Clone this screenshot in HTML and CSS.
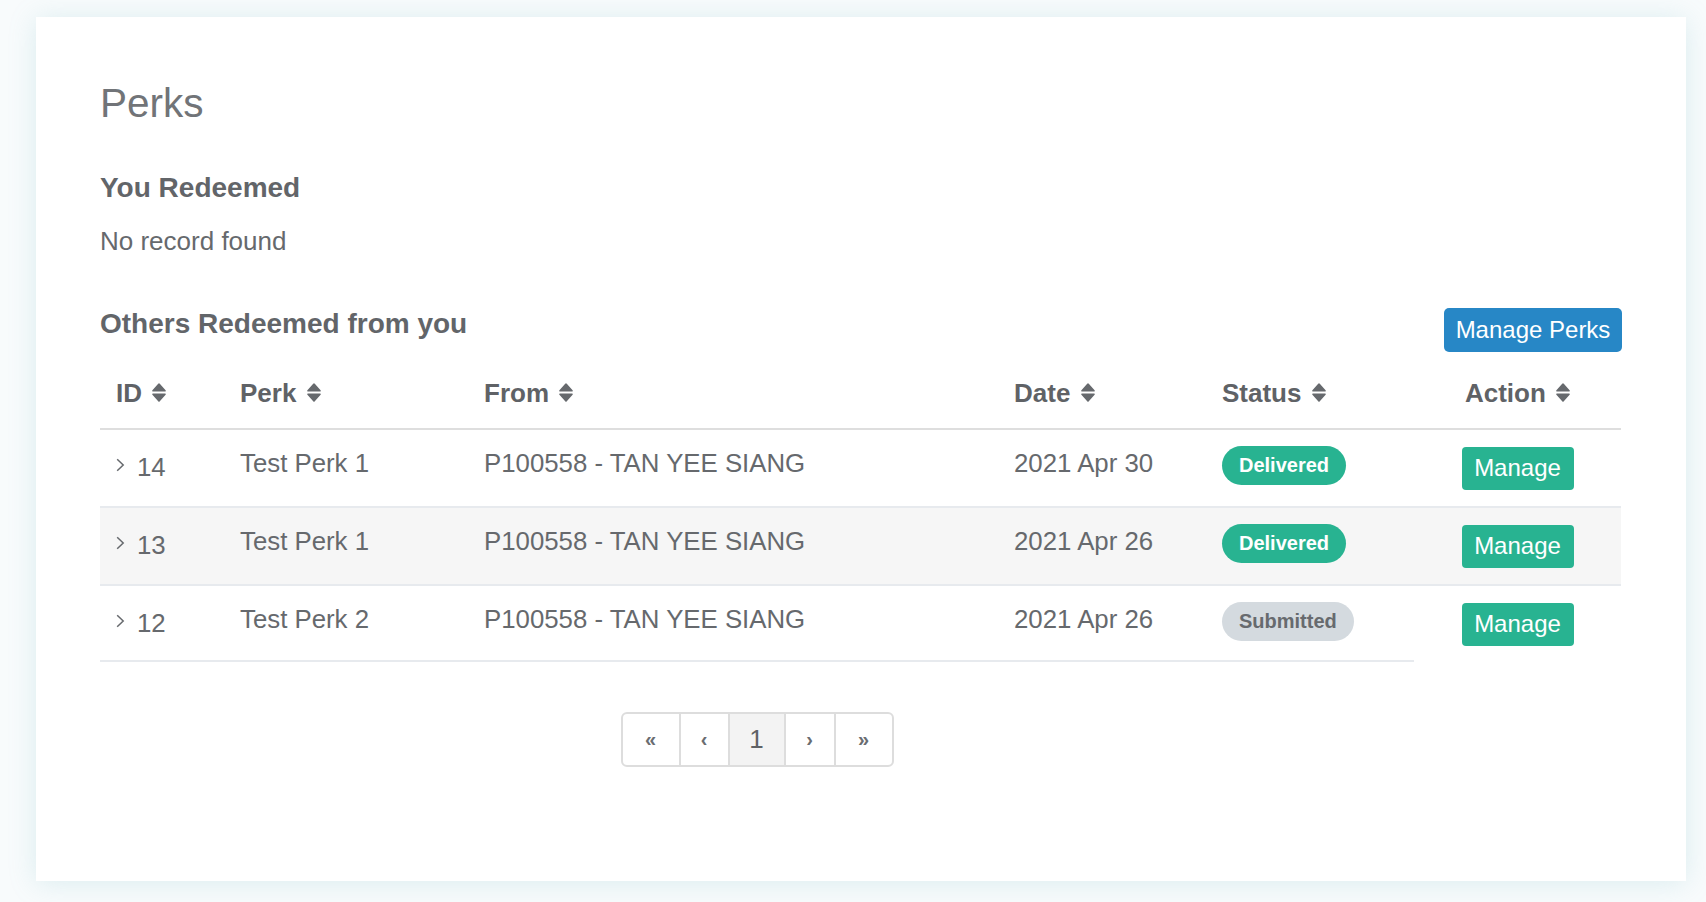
FILE: index.html
```html
<!DOCTYPE html>
<html lang="en">
<head>
<meta charset="utf-8">
<title>Perks</title>
<link rel="stylesheet" href="styles.css">
</head>
<body>
<div class="card">
  <h1 class="page-title">Perks</h1>
  <h2 class="section-title first">You Redeemed</h2>
  <p class="empty">No record found</p>

  <div class="section-head">
    <h2 class="section-title">Others Redeemed from you</h2>
    <button class="btn btn-blue" type="button">Manage Perks</button>
  </div>

  <table class="perks-table">
    <colgroup>
      <col class="c-id"><col class="c-perk"><col class="c-from"><col class="c-date"><col class="c-status"><col class="c-action">
    </colgroup>
    <thead>
      <tr>
        <th>ID <svg class="sort" viewBox="0 0 14 19" width="14" height="19"><path d="M6.2 0.8a1 1 0 0 1 1.6 0L13.6 7.3a0.8 0.8 0 0 1-0.6 1.3H1a0.8 0.8 0 0 1-0.6-1.3Z"/><path d="M1 10.4h12a0.8 0.8 0 0 1 0.6 1.3L7.8 18.2a1 1 0 0 1-1.6 0L0.4 11.7a0.8 0.8 0 0 1 0.6-1.3Z"/></svg></th>
        <th>Perk <svg class="sort" viewBox="0 0 14 19" width="14" height="19"><path d="M6.2 0.8a1 1 0 0 1 1.6 0L13.6 7.3a0.8 0.8 0 0 1-0.6 1.3H1a0.8 0.8 0 0 1-0.6-1.3Z"/><path d="M1 10.4h12a0.8 0.8 0 0 1 0.6 1.3L7.8 18.2a1 1 0 0 1-1.6 0L0.4 11.7a0.8 0.8 0 0 1 0.6-1.3Z"/></svg></th>
        <th>From <svg class="sort" viewBox="0 0 14 19" width="14" height="19"><path d="M6.2 0.8a1 1 0 0 1 1.6 0L13.6 7.3a0.8 0.8 0 0 1-0.6 1.3H1a0.8 0.8 0 0 1-0.6-1.3Z"/><path d="M1 10.4h12a0.8 0.8 0 0 1 0.6 1.3L7.8 18.2a1 1 0 0 1-1.6 0L0.4 11.7a0.8 0.8 0 0 1 0.6-1.3Z"/></svg></th>
        <th>Date <svg class="sort" viewBox="0 0 14 19" width="14" height="19"><path d="M6.2 0.8a1 1 0 0 1 1.6 0L13.6 7.3a0.8 0.8 0 0 1-0.6 1.3H1a0.8 0.8 0 0 1-0.6-1.3Z"/><path d="M1 10.4h12a0.8 0.8 0 0 1 0.6 1.3L7.8 18.2a1 1 0 0 1-1.6 0L0.4 11.7a0.8 0.8 0 0 1 0.6-1.3Z"/></svg></th>
        <th>Status <svg class="sort" viewBox="0 0 14 19" width="14" height="19"><path d="M6.2 0.8a1 1 0 0 1 1.6 0L13.6 7.3a0.8 0.8 0 0 1-0.6 1.3H1a0.8 0.8 0 0 1-0.6-1.3Z"/><path d="M1 10.4h12a0.8 0.8 0 0 1 0.6 1.3L7.8 18.2a1 1 0 0 1-1.6 0L0.4 11.7a0.8 0.8 0 0 1 0.6-1.3Z"/></svg></th>
        <th class="action">Action <svg class="sort" viewBox="0 0 14 19" width="14" height="19"><path d="M6.2 0.8a1 1 0 0 1 1.6 0L13.6 7.3a0.8 0.8 0 0 1-0.6 1.3H1a0.8 0.8 0 0 1-0.6-1.3Z"/><path d="M1 10.4h12a0.8 0.8 0 0 1 0.6 1.3L7.8 18.2a1 1 0 0 1-1.6 0L0.4 11.7a0.8 0.8 0 0 1 0.6-1.3Z"/></svg></th>
      </tr>
    </thead>
    <tbody>
      <tr>
        <td><span class="id-cell"><svg class="chev" viewBox="0 0 9 14" width="9" height="14"><path d="M1.2 1.2 7.2 7 1.2 12.8"/></svg>14</span></td>
        <td>Test Perk 1</td>
        <td>P100558 - TAN YEE SIANG</td>
        <td>2021 Apr 30</td>
        <td><span class="badge badge-green">Delivered</span></td>
        <td class="action"><button class="btn btn-green" type="button">Manage</button></td>
      </tr>
      <tr class="alt">
        <td><span class="id-cell"><svg class="chev" viewBox="0 0 9 14" width="9" height="14"><path d="M1.2 1.2 7.2 7 1.2 12.8"/></svg>13</span></td>
        <td>Test Perk 1</td>
        <td>P100558 - TAN YEE SIANG</td>
        <td>2021 Apr 26</td>
        <td><span class="badge badge-green">Delivered</span></td>
        <td class="action"><button class="btn btn-green" type="button">Manage</button></td>
      </tr>
      <tr class="last">
        <td><span class="id-cell"><svg class="chev" viewBox="0 0 9 14" width="9" height="14"><path d="M1.2 1.2 7.2 7 1.2 12.8"/></svg>12</span></td>
        <td>Test Perk 2</td>
        <td>P100558 - TAN YEE SIANG</td>
        <td>2021 Apr 26</td>
        <td><span class="badge badge-gray">Submitted</span></td>
        <td class="action"><button class="btn btn-green" type="button">Manage</button></td>
      </tr>
    </tbody>
  </table>

  <div class="pager-wrap">
    <nav class="pager">
      <span class="pg pg-first">«</span>
      <span class="pg pg-prev">‹</span>
      <span class="pg pg-num pg-active">1</span>
      <span class="pg pg-next">›</span>
      <span class="pg pg-last">»</span>
    </nav>
  </div>
</div>
</body>
</html>
```

FILE: styles.css
```css
* { box-sizing: border-box; }

html, body {
  margin: 0;
  background: #f8fbfc;
}

body {
  padding: 17px 20px 21px 36px;
  font-family: "Liberation Sans", Arial, Helvetica, sans-serif;
  color: #66696d;
}

.card {
  background: #ffffff;
  padding: 62px 64px 114px 64px;
  box-shadow: 0 2px 26px rgba(120, 185, 195, 0.22);
}

.page-title {
  margin: 0;
  font-size: 40.5px;
  line-height: 48px;
  font-weight: 400;
  color: #717478;
}

.section-title {
  margin: 0;
  font-size: 28px;
  line-height: 33.6px;
  font-weight: 700;
  color: #626569;
}

.section-title.first {
  margin-top: 43.5px;
}

.empty {
  margin: 18px 0 0 0;
  font-size: 26px;
  line-height: 38.4px;
  color: #66696d;
}

.section-head {
  margin-top: 46px;
  display: flex;
  justify-content: space-between;
  align-items: flex-start;
}

.btn {
  border: 0;
  font-family: "Liberation Sans", Arial, Helvetica, sans-serif;
  color: #ffffff;
  cursor: pointer;
  padding: 0;
}

.btn-blue {
  margin-top: 1.6px;
  height: 44px;
  width: 178px;
  font-size: 24px;
  border-radius: 5px;
  background: #2787c6;
}

.btn-green {
  margin-top: 3px;
  height: 43px;
  width: 112px;
  font-size: 24px;
  border-radius: 4px;
  background: #28b391;
}

.perks-table {
  margin-top: 8px;
  width: 1521px;
  table-layout: fixed;
  border-collapse: separate;
  border-spacing: 0;
  font-size: 25.8px;
  line-height: 38.4px;
}

.c-id { width: 124px; }
.c-perk { width: 244px; }
.c-from { width: 530px; }
.c-date { width: 208px; }
.c-status { width: 208px; }
.c-action { width: 207px; }

.perks-table th {
  text-align: left;
  font-size: 26px;
  font-weight: 700;
  color: #5f6266;
  padding: 14px 16px 15px 16px;
  border-bottom: 2px solid #dedede;
  white-space: nowrap;
}

.perks-table th.action,
.perks-table td.action {
  text-align: center;
}

.sort {
  fill: #66696d;
  vertical-align: baseline;
  margin-left: 3px;
}

.perks-table td {
  padding: 14px 16px 16px 16px;
  vertical-align: top;
  color: #66696d;
  border-bottom: 2px solid #e7eaee;
  white-space: nowrap;
}

.perks-table tr.alt td {
  background: #f6f6f6;
}

.perks-table tr.last td.action {
  border-bottom: 0;
}

.id-cell {
  display: inline-flex;
  align-items: center;
  gap: 12px;
  padding-top: 5px;
  line-height: 36px;
}

.chev {
  fill: none;
  stroke: #66696d;
  stroke-width: 1.5;
  margin-top: -3px;
}

.badge {
  display: inline-block;
  margin-top: 1px;
  height: 39px;
  line-height: 39px;
  padding: 0 17px;
  border-radius: 20px;
  font-size: 20px;
  font-weight: 700;
}

.badge-green {
  background: #28b391;
  color: #ffffff;
}

.badge-gray {
  background: #d4dadf;
  color: #676a6e;
}

.pager-wrap {
  width: 1314px;
  margin-top: 50px;
  display: flex;
  justify-content: center;
}

.pager {
  display: flex;
  border: 2px solid #dddddd;
  border-radius: 6px;
  overflow: hidden;
  height: 55px;
}

.pg {
  display: flex;
  align-items: center;
  justify-content: center;
  border-left: 2px solid #dddddd;
  font-size: 20px;
  font-weight: 700;
  color: #6a6d71;
}

.pg-first { width: 56px; border-left: 0; }
.pg-prev { width: 49px; }
.pg-num { width: 56px; }
.pg-next { width: 50px; }
.pg-last { width: 58px; }

.pg-num {
  font-size: 26px;
  font-weight: 400;
  color: #5f6266;
}

.pg-active {
  background: #f3f3f3;
}
```
